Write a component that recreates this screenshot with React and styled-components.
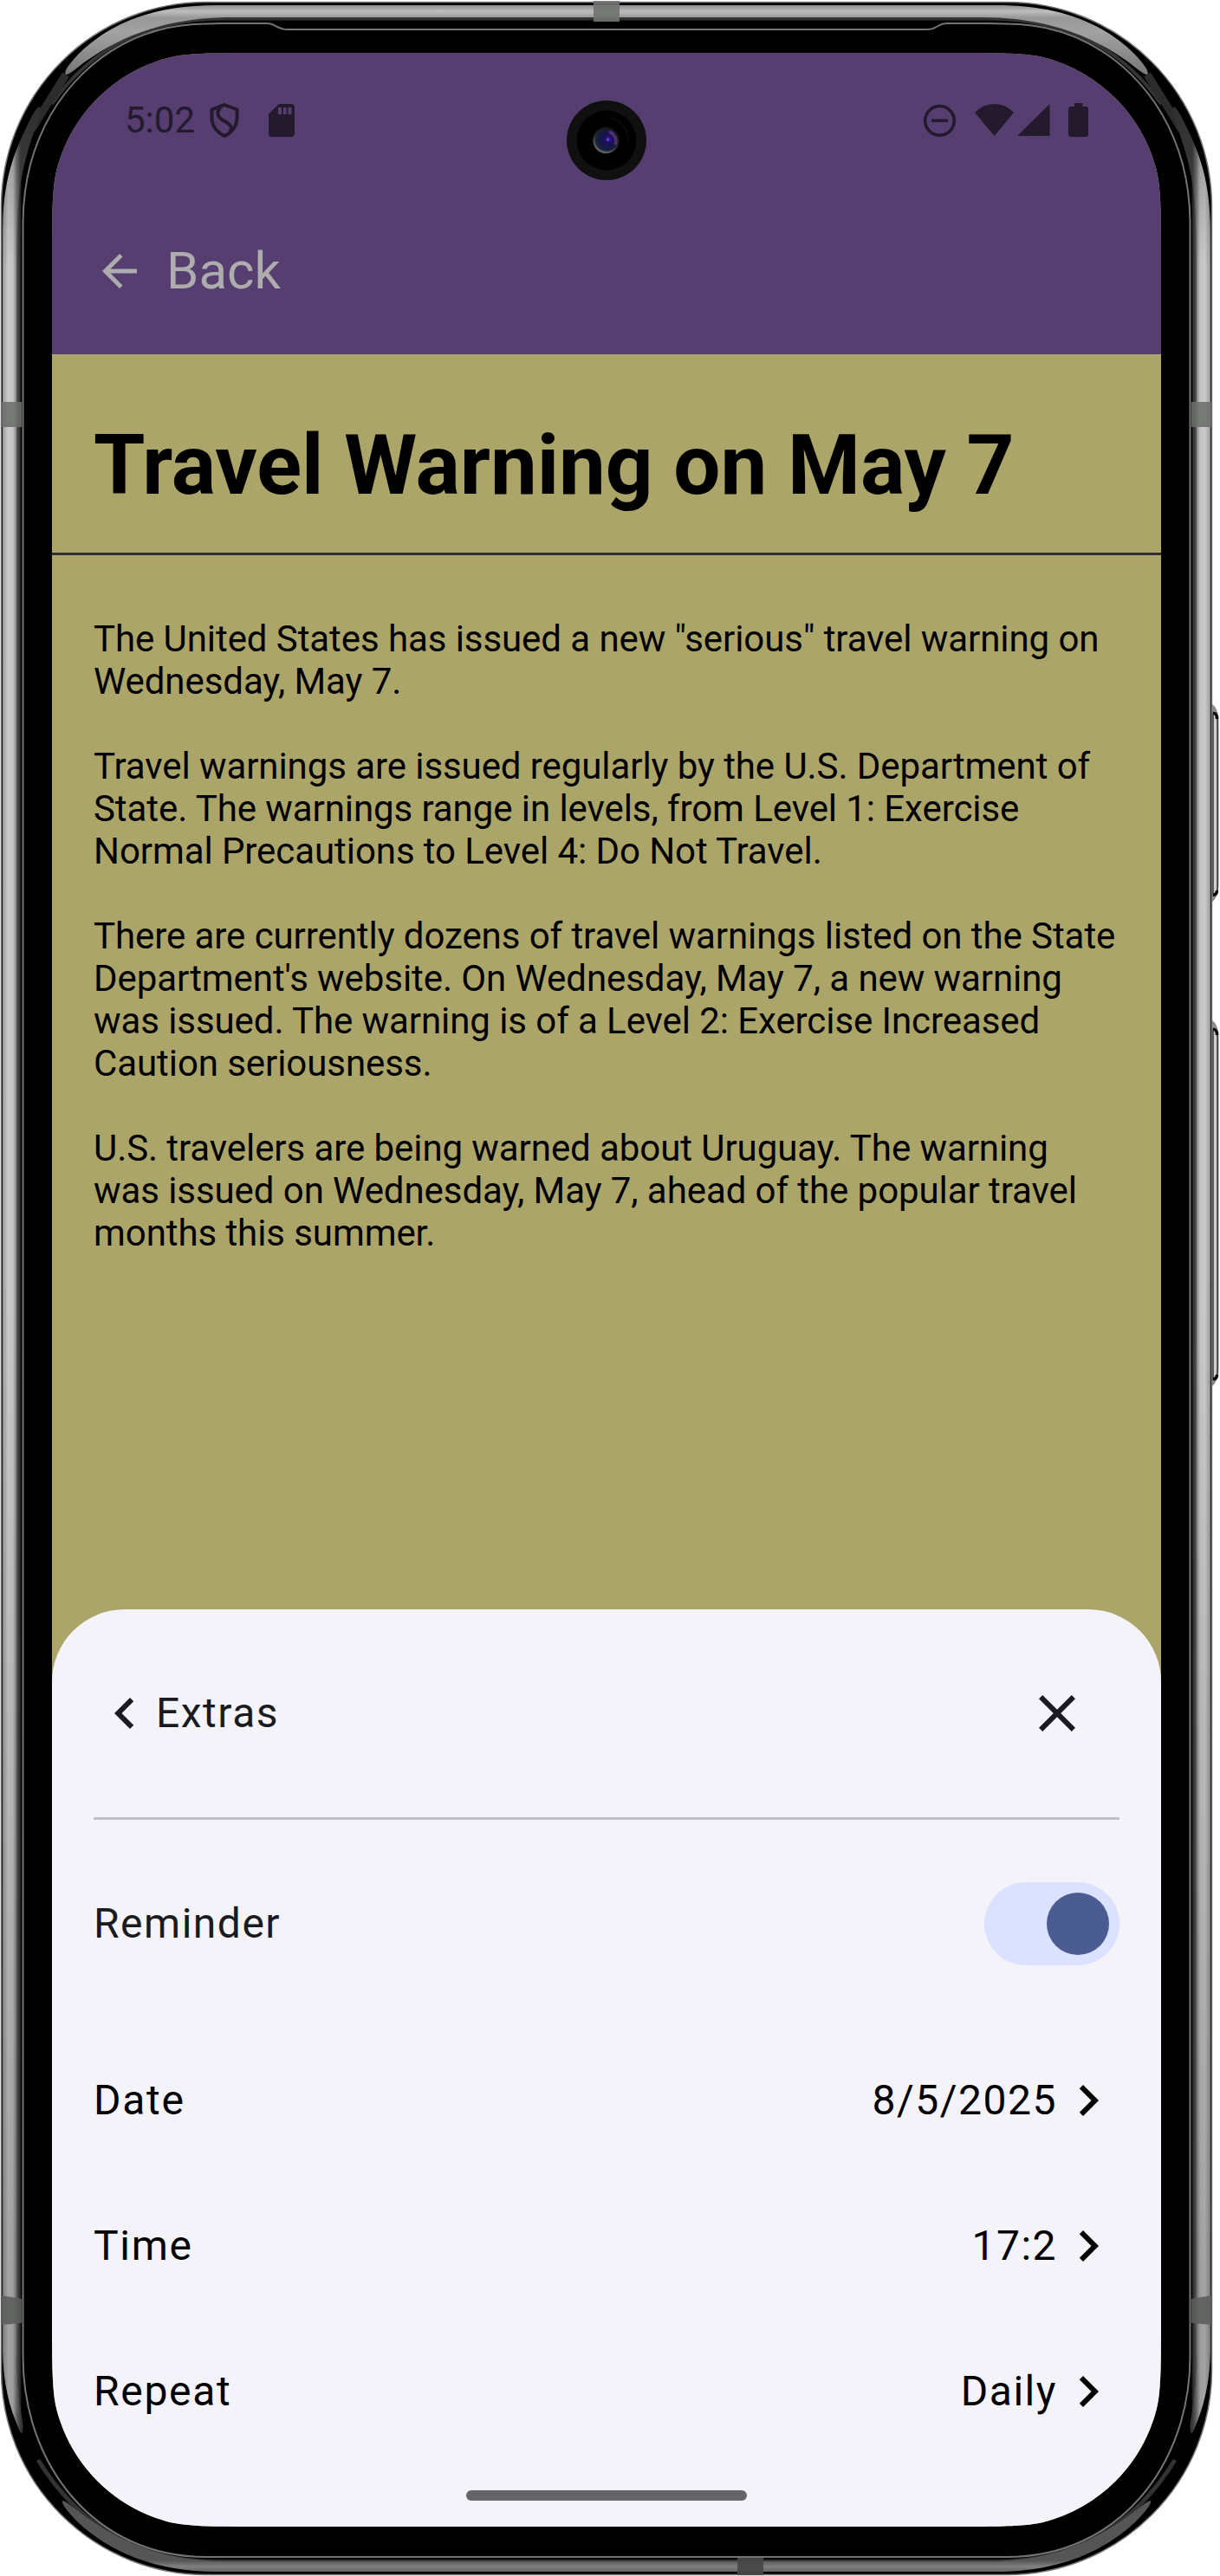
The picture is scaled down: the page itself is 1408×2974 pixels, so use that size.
import React, { useState } from "react";
import styled, { createGlobalStyle } from "styled-components";

const GlobalStyle = createGlobalStyle`
  * { box-sizing: border-box; }
  body { margin: 0; background: #fff; }
`;

const Device = styled.div`
  position: relative;
  width: 1408px;
  height: 2974px;
  padding: 61px 68px 57px 60px;
  overflow: hidden;
  font-family: Roboto, "Open Sans", sans-serif;
`;

const FrameArt = styled.svg`
  position: absolute;
  inset: 0;
`;

const CORNER = "A181 181 0 0 1";
const screenShape = [
  `M0 230C0 150 2 141 13 112${CORNER} 112 13C141 2 150 0 230 0`,
  `H1050C1130 0 1139 2 1168 13${CORNER} 1267 112C1278 141 1280 150 1280 230`,
  `V2626C1280 2706 1278 2715 1267 2744${CORNER} 1168 2843C1139 2854 1130 2856 1050 2856`,
  `H230C150 2856 141 2854 112 2843${CORNER} 13 2744C2 2715 0 2706 0 2626Z`,
].join("");

const Screen = styled.div`
  position: relative;
  display: flex;
  flex-direction: column;
  width: 1280px;
  height: 2856px;
  background: #aca569;
  clip-path: path("${screenShape}");
`;

const TopArea = styled.header`
  height: 348px;
  background: #563e71;
`;

const StatusBar = styled.div`
  display: flex;
  align-items: flex-start;
  justify-content: space-between;
  height: 156px;
  padding: 53px 84px 0;
  color: #231a2d;
`;

const StatusGroup = styled.div`
  display: flex;
  align-items: flex-start;
`;

const Clock = styled.span`
  width: 98px;
  font-size: 42px;
  line-height: 49px;
  white-space: nowrap;
`;

const StatusIcon = styled.svg`
  flex: none;
  margin-top: 4px;
  margin-left: ${(p) => p.$gap || 0}px;
`;

const BackBar = styled.div`
  display: flex;
  align-items: center;
  gap: 24px;
  height: 192px;
  padding: 0 48px;
  color: #adadad;
  font-size: 60px;
  line-height: 70px;
`;

const Camera = styled.svg`
  position: absolute;
  left: 593px;
  top: 54px;
`;

const Article = styled.main`
  flex: 1;
  color: #000;
`;

const Title = styled.h1`
  margin: 0;
  height: 229px;
  padding: 72px 48px 0;
  font-size: 96px;
  font-weight: 700;
  line-height: 112px;
  letter-spacing: -0.07px;
  white-space: nowrap;
`;

const Rule = styled.div`
  height: 3px;
  background: ${(p) => p.$color};
`;

const Body = styled.div`
  display: flex;
  flex-direction: column;
  gap: 49px;
  padding: 72px 48px 0;
`;

const Paragraph = styled.p`
  margin: 0;
  font-size: 42px;
  line-height: 49px;
  letter-spacing: -0.075px;
  white-space: pre;
`;

const Sheet = styled.section`
  display: flex;
  flex-direction: column;
  height: 1059px;
  padding: 0 48px;
  border-radius: 84px 84px 0 0;
  background: #f4f3fa;
  font-size: 48px;
  line-height: 72px;
  letter-spacing: 1.5px;
  color: #1a1b20;
`;

const SheetHeader = styled.div`
  display: flex;
  align-items: center;
  justify-content: space-between;
  height: 240px;
  padding-right: 36px;
`;

const Inline = styled.div`
  display: flex;
  align-items: center;
`;

const ReminderRow = styled.div`
  display: flex;
  align-items: center;
  justify-content: space-between;
  height: 240px;
`;

const Toggle = styled.button`
  display: flex;
  align-items: center;
  justify-content: ${(p) => (p.$on ? "flex-end" : "flex-start")};
  width: 156px;
  height: 96px;
  padding: 12px;
  border: 0;
  border-radius: 48px;
  background: #dae2ff;
`;

const Thumb = styled.span`
  width: 72px;
  height: 72px;
  border-radius: 50%;
  background: #4a5c92;
`;

const OptionRow = styled.div`
  display: flex;
  align-items: center;
  justify-content: space-between;
  height: 168px;
  color: #000;
`;

const OptionLabel = styled.span`
  letter-spacing: 1.7px;
`;

const HomeIndicator = styled.div`
  align-self: center;
  width: 324px;
  height: 12px;
  margin-top: 30px;
  border-radius: 6px;
  background: #646466;
`;

const ICONS = {
  back: "M20 11H7.83l5.59-5.59L12 4l-8 8 8 8 1.41-1.41L7.83 13H20v-2z",
  left: "M15.41 7.41 14 6l-6 6 6 6 1.41-1.41L10.83 12z",
  right: "M8.59 16.59 13.17 12 8.59 7.41 10 6l6 6-6 6-1.41-1.41z",
  close:
    "M19 6.41 17.59 5 12 10.59 6.41 5 5 6.41 10.59 12 5 17.59 6.41 19 12 13.41 17.59 19 19 17.59 13.41 12z",
};

function Icon({ name, size = 72 }) {
  return (
    <svg width={size} height={size} viewBox="0 0 24 24" fill="currentColor">
      <path d={ICONS[name]} />
    </svg>
  );
}

const outerBody =
  "M1.5 238A236 236 0 0 1 237.5 2.5H1162.5A236 236 0 0 1 1398.5 238V2737A236 236 0 0 1 1162.5 2972.5H237.5A236 236 0 0 1 1.5 2737Z";
const glassSeam =
  "M26.5 260C26.5 235 29 213 35 190C58 105 120 48 194 32C215 28 230 27.3 260 27H308C318 27 320 34 332 34H1070C1082 34 1082 27 1092 27H1140C1170 27.3 1185 28 1206 32C1280 48 1342 105 1365 190C1371 213 1373.5 235 1373.5 260V2720C1373.5 2846 1291 2952 1162 2952H238C109 2952 26.5 2846 26.5 2720Z";
const sideBand =
  "M46 123C42 124 37 133 30 148C11 187 3 220 3 270V2715C4 2745 8 2775 24 2809C27 2810 27 2800 25 2790C21 2765 19 2740 19 2710V300C19 240 22 210 32 175C37 157 47 133 46 123Z";
const topBand =
  "M76 86C73 84 78 76 90 63C128 25 180 6 250 6H1150C1220 6 1272 25 1310 63C1322 76 1327 84 1324 86C1321 87 1311 78 1300 70C1253 37 1200 20 1133 20H267C200 20 147 37 100 70C89 78 79 87 76 86Z";
const bottomBand =
  "M72 2887C70 2890 79 2901 90 2912C128 2947 180 2969 250 2969H1150C1220 2969 1272 2947 1310 2912C1321 2901 1330 2890 1328 2887C1324 2887 1312 2898 1299 2907C1250 2942 1200 2957 1140 2957H260C200 2957 150 2942 101 2907C88 2898 76 2887 72 2887Z";

function SideRail() {
  return (
    <>
      <path d="M19 250C19 215 25 185 34 165L38 168C28 195 24 225 24 260V2720C25 2750 27 2770 32 2795L25 2795C21 2765 19 2740 19 2710Z" fill="url(#railShade)" />
      <path d={sideBand} fill="url(#rail)" />
      <path d={sideBand} fill="url(#railFade)" />
      <rect x="1" y="464" width="24" height="29" fill="#6b6e6b" fillOpacity=".88" />
      <path d="M1 2650L25 2654V2682L1 2684Z" fill="#5c5e5b" fillOpacity=".9" />
    </>
  );
}

function SideButton({ y, height }) {
  const end = y + height;
  return (
    <g>
      <path
        d={`M1398 ${y}Q1406.500 ${y + 6} 1406.500 ${y + 20}V${end - 20}Q1406.500 ${end - 6} 1398 ${end}Z`}
        fill="#8c8c8c"
      />
      <path
        d={`M1400 ${y + 12}Q1405 ${y + 10} 1405 ${y + 22}V${end - 20}Q1405 ${end - 6} 1400 ${end - 8}Z`}
        fill="#d0d0d0"
        stroke="#222"
        strokeWidth="1.3"
      />
      <path
        d={`M1400 ${y + 11.5}Q1404.500 ${y + 11} 1404.500 ${y + 18}M1400 ${end - 9}Q1404.500 ${end - 9} 1404.500 ${end - 14}`}
        fill="none"
        stroke="#0c0c0c"
        strokeWidth="3.500"
      />
    </g>
  );
}

function PhoneFrame() {
  return (
    <FrameArt width="1408" height="2974" viewBox="0 0 1408 2974">
      <defs>
        <linearGradient id="rail" gradientUnits="userSpaceOnUse" x1="2" x2="24" y1="0" y2="0">
          <stop offset="0" stopColor="#777" />
          <stop offset=".14" stopColor="#aaa" />
          <stop offset=".35" stopColor="#cdcdcd" />
          <stop offset=".6" stopColor="#c2c2c2" />
          <stop offset=".8" stopColor="#777" />
          <stop offset="1" stopColor="#444" />
        </linearGradient>
        <linearGradient id="railShade" gradientUnits="userSpaceOnUse" x1="18" x2="25" y1="0" y2="0">
          <stop offset="0" stopColor="#666" />
          <stop offset=".8" stopColor="#252525" />
          <stop offset="1" stopColor="#000" />
        </linearGradient>
        <linearGradient id="railFade" gradientUnits="userSpaceOnUse" x1="0" x2="0" y1="120" y2="2810">
          <stop offset="0" stopColor="#000" stopOpacity=".3" />
          <stop offset=".07" stopColor="#000" stopOpacity="0" />
          <stop offset=".5" stopColor="#000" stopOpacity="0" />
          <stop offset=".95" stopColor="#000" stopOpacity=".2" />
        </linearGradient>
        <linearGradient id="top" gradientUnits="userSpaceOnUse" x1="0" x2="0" y1="5" y2="86">
          <stop offset="0" stopColor="#858585" />
          <stop offset=".1" stopColor="#bebebe" />
          <stop offset=".19" stopColor="#989898" />
          <stop offset=".4" stopColor="#a2a2a2" />
          <stop offset="1" stopColor="#777" />
        </linearGradient>
        <linearGradient id="bottom" gradientUnits="userSpaceOnUse" x1="0" x2="0" y1="2956" y2="2970">
          <stop offset="0" stopColor="#555" />
          <stop offset=".5" stopColor="#808080" />
          <stop offset="1" stopColor="#606060" />
        </linearGradient>
      </defs>
      <SideButton y={812} height={230} />
      <SideButton y={1177} height={424} />
      <path d={outerBody} fill="#000" stroke="#777" strokeWidth="1.5" />
      <path d="M60 120C105 55 170 21.5 260 21.5H1140C1230 21.5 1295 55 1340 120" fill="none" stroke="#343434" strokeWidth="4" />
      <path d="M36 150L76 86M1364 150L1324 86" stroke="#2c2c2c" strokeWidth="9" />
      <path d="M44 2840C90 2915 160 2957.5 250 2957.5H1150C1240 2957.5 1310 2915 1356 2840" fill="none" stroke="#333" strokeWidth="5" />
      <path d={topBand} fill="url(#top)" />
      <path d={bottomBand} fill="url(#bottom)" />
      <SideRail />
      <g transform="translate(1400 0) scale(-1 1)">
        <SideRail />
      </g>
      <path d={glassSeam} fill="#000" stroke="#747474" strokeWidth="2" />
      <rect x="685" y="1" width="30" height="24" fill="#70736f" fillOpacity=".92" />
      <rect x="851" y="2953" width="30" height="20" fill="#484848" fillOpacity=".95" />
    </FrameArt>
  );
}

function FrontCamera() {
  return (
    <Camera width="94" height="94" viewBox="0 0 94 94">
      <defs>
        <radialGradient id="lens" cx=".6" cy=".45" r=".6">
          <stop offset="0" stopColor="#3a1fb0" />
          <stop offset=".28" stopColor="#1c1056" />
          <stop offset=".7" stopColor="#141c3c" />
          <stop offset="1" stopColor="#1c3440" />
        </radialGradient>
        <linearGradient id="lensRing" x1=".8" y1="0" x2=".3" y2="1">
          <stop offset="0" stopColor="#111" />
          <stop offset=".55" stopColor="#262626" />
          <stop offset="1" stopColor="#666" />
        </linearGradient>
      </defs>
      <circle cx="47" cy="47" r="46" fill="#101010" />
      <circle cx="47" cy="47" r="34.5" fill="#000" />
      <path d="M50 21A26 26 0 0 1 72 49" fill="none" stroke="#0c0c0c" strokeWidth="1.5" />
      <circle cx="46.5" cy="47" r="14" fill="url(#lens)" stroke="url(#lensRing)" strokeWidth="2.5" />
      <path d="M50 37A11.5 11.5 0 0 1 57 52" fill="none" stroke="#8a4a9c" strokeWidth="3.5" opacity=".5" />
      <circle cx="48.5" cy="46" r="1.6" fill="#6a45ff" />
    </Camera>
  );
}

const paragraphs = [
  'The United States has issued a new "serious" travel warning on\nWednesday, May 7.',
  "Travel warnings are issued regularly by the U.S. Department of\nState. The warnings range in levels, from Level 1: Exercise\nNormal Precautions to Level 4: Do Not Travel.",
  "There are currently dozens of travel warnings listed on the State\nDepartment's website. On Wednesday, May 7, a new warning\nwas issued. The warning is of a Level 2: Exercise Increased\nCaution seriousness.",
  "U.S. travelers are being warned about Uruguay. The warning\nwas issued on Wednesday, May 7, ahead of the popular travel\nmonths this summer.",
];

const options = [
  { label: "Date", value: "8/5/2025" },
  { label: "Time", value: "17:2" },
  { label: "Repeat", value: "Daily" },
];

export default function App() {
  const [reminder, setReminder] = useState(true);
  return (
    <Device>
      <GlobalStyle />
      <PhoneFrame />
      <Screen>
        <TopArea>
          <StatusBar>
            <StatusGroup>
              <Clock>5:02</Clock>
              <StatusIcon width="34" height="42" viewBox="0 0 34 42" fill="none" stroke="currentColor" strokeWidth="4">
                <path d="M17 3L2.5 8.5V18C2.5 27 8 35 17 38.8C26 35 31.5 27 31.5 18V8.5Z" strokeLinejoin="round" />
                <path d="M14.5 4C7 10 8 16.500 15.500 21C24 25.500 27 29 23.500 34" />
              </StatusIcon>
              <StatusIcon $gap={34} width="30" height="42" viewBox="0 0 30 42" fill="currentColor" fillRule="evenodd">
                <path d="M12 2H26Q30 2 30 6V35.500Q30 40 26 40H4Q0 40 0 35.500V13.500ZM11 6V14H15V6ZM17 6V14H20.500V6ZM22.500 6V14H26.500V6Z" />
              </StatusIcon>
            </StatusGroup>
            <StatusGroup>
              <StatusIcon width="38" height="42" viewBox="0 0 38 42" fill="none" stroke="currentColor" strokeWidth="3.600">
                <circle cx="19.500" cy="21.300" r="16.800" />
                <path d="M10 21.300H29" />
              </StatusIcon>
              <StatusIcon $gap={22} width="45" height="42" viewBox="0 0 45 42" fill="currentColor">
                <path d="M0 12C12 -1.500 33 -1.500 45 12L22.500 39Z" />
              </StatusIcon>
              <StatusIcon $gap={4} width="38" height="42" viewBox="0 0 38 42" fill="currentColor">
                <path d="M0 39L37.500 2V39Z" />
              </StatusIcon>
              <StatusIcon $gap={21} width="23" height="42" viewBox="0 0 23 42" fill="currentColor">
                <path d="M7 1H16.500V5H20Q23 5 23 8V37Q23 40 20 40H3Q0 40 0 37V8Q0 5 3 5H7Z" />
              </StatusIcon>
            </StatusGroup>
          </StatusBar>
          <BackBar>
            <Icon name="back" size={60} />
            <span>Back</span>
          </BackBar>
        </TopArea>
        <Article>
          <Title>Travel Warning on May 7</Title>
          <Rule $color="#302f37" />
          <Body>
            {paragraphs.map((text) => (
              <Paragraph key={text}>{text}</Paragraph>
            ))}
          </Body>
        </Article>
        <Sheet>
          <SheetHeader>
            <Inline>
              <Icon name="left" />
              <span>Extras</span>
            </Inline>
            <Icon name="close" />
          </SheetHeader>
          <Rule $color="#bfbec4" />
          <ReminderRow>
            <span>Reminder</span>
            <Toggle $on={reminder} onClick={() => setReminder(!reminder)} aria-label="Reminder">
              <Thumb />
            </Toggle>
          </ReminderRow>
          {options.map(({ label, value }) => (
            <OptionRow key={label}>
              <OptionLabel>{label}</OptionLabel>
              <Inline>
                <span>{value}</span>
                <Icon name="right" />
              </Inline>
            </OptionRow>
          ))}
          <HomeIndicator />
        </Sheet>
        <FrontCamera />
      </Screen>
    </Device>
  );
}
